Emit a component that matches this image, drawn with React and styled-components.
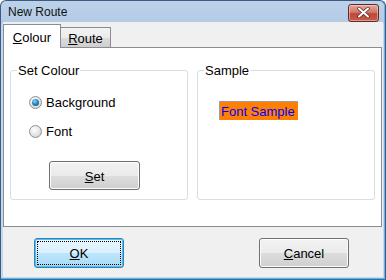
import React from 'react';
import styled, { createGlobalStyle } from 'styled-components';

const Global = createGlobalStyle`
  html, body {
    margin: 0;
    padding: 0;
    background: #ffffff;
  }
  body {
    font-family: "Liberation Sans", Arial, sans-serif;
    font-size: 13px;
    color: #000;
  }
`;

const Window = styled.div`
  box-sizing: border-box;
  width: 386px;
  height: 280px;
  border: 1px solid #3d5b7e;
  border-bottom-color: #2e6f9e;
  border-radius: 6px 6px 0 0;
  background: linear-gradient(#bcd2ea 0px, #b3cbe6 22px, #c2d8ee 23px, #c2d8ee 100%);
  padding: 0 2px 2px 2px;
  display: flex;
  flex-direction: column;
  box-shadow: inset 0 -1px 0 #5fb6e8, inset -1px 0 0 #5fb6e8;
`;

const TitleBar = styled.div`
  height: 21px;
  display: flex;
  align-items: center;
  justify-content: space-between;
  padding-left: 5px;
  font-size: 12px;
  color: #111;
`;

const CloseButton = styled.div`
  width: 29px;
  height: 16px;
  margin-right: 4px;
  margin-top: 2px;
  border: 1px solid #5e2a2e;
  border-radius: 3px;
  background: linear-gradient(#e3a99c 0%, #d37868 45%, #c1473a 55%, #c95b48 100%);
  display: flex;
  align-items: center;
  justify-content: center;
  box-shadow: inset 0 0 0 1px rgba(255, 220, 210, 0.5);
`;

const Client = styled.div`
  flex: 1;
  background: #f0f0f0;
  display: flex;
  flex-direction: column;
  padding: 2px 1px 0 0;
`;

const TabStrip = styled.div`
  display: flex;
  align-items: flex-end;
  height: 23px;
`;

const Tab = styled.div`
  box-sizing: border-box;
  position: relative;
  border: 1px solid #898c95;
  border-bottom: none;
  display: flex;
  align-items: center;
  justify-content: center;
  ${({ $active }) =>
    $active
      ? `
    width: 58px;
    height: 24px;
    margin-bottom: -1px;
    background: #ffffff;
    z-index: 1;
    padding-top: 1px;
  `
      : `
    width: 51px;
    height: 20px;
    margin-left: -1px;
    background: linear-gradient(#f3f3f3 0%, #ebebeb 50%, #dddddd 51%, #cfcfcf 100%);
    padding-top: 1px;
  `}
`;

const Panel = styled.div`
  box-sizing: border-box;
  height: 180px;
  border: 1px solid #898c95;
  background: #ffffff;
  display: grid;
  grid-template-columns: 178px 178px;
  column-gap: 9px;
  padding: 15px 6px 0 6px;
`;

const Group = styled.fieldset`
  box-sizing: border-box;
  margin: 0;
  height: 137px;
  border: 1px solid #d5dfe5;
  border-radius: 3px;
  padding: 0 0 0 6px;
  min-width: 0;
`;

const Legend = styled.legend`
  padding: 0 1px;
  line-height: 15px;
`;

const GroupBody = styled.div`
  display: flex;
  flex-direction: column;
  align-items: flex-start;
  padding: ${({ $pad }) => $pad};
`;

const RadioRow = styled.label`
  display: flex;
  align-items: center;
  gap: 4px;
  height: 17px;
  margin-bottom: ${({ $mb }) => $mb || 0}px;
`;

const RadioDot = styled.span`
  box-sizing: border-box;
  width: 13px;
  height: 13px;
  border-radius: 50%;
  border: 1px solid #8e8f8f;
  background: radial-gradient(circle at 40% 35%, #ffffff 0%, #e6e6e6 50%, #c9c9c9 100%);
  display: flex;
  align-items: center;
  justify-content: center;

  &::after {
    content: '';
    display: ${({ $checked }) => ($checked ? 'block' : 'none')};
    width: 7px;
    height: 7px;
    border-radius: 50%;
    background: radial-gradient(circle at 40% 35%, #8fd2f7 0%, #1b79b6 55%, #0c4a84 100%);
  }
`;

const Button = styled.div`
  box-sizing: border-box;
  width: ${({ $w }) => $w}px;
  height: ${({ $h }) => $h}px;
  margin-left: ${({ $ml }) => $ml || 0}px;
  border: 1px solid #707070;
  border-radius: 3px;
  background: linear-gradient(#f2f2f2 0%, #ebebeb 50%, #dddddd 51%, #cfcfcf 100%);
  box-shadow: inset 0 0 0 1px #fcfcfc;
  display: flex;
  align-items: center;
  justify-content: center;
  padding-top: 1px;
`;

const DefaultButton = styled(Button)`
  border-color: #3c7fb1;
  background: linear-gradient(#eaf6fd 0%, #d9f0fc 50%, #bee6fd 51%, #a7d9f5 100%);
  box-shadow: inset 0 0 0 1px #48c2f5;
  position: relative;

  &::before {
    content: '';
    position: absolute;
    inset: 2px;
    border: 1px dotted #000;
  }
`;

const SampleBox = styled.div`
  background: #ff8000;
  color: #0000ff;
  border-top: 1px solid #a0a0a0;
  border-left: 1px solid #a0a0a0;
  height: 19px;
  width: 79px;
  line-height: 19px;
  padding-left: 1px;
  box-sizing: border-box;
  white-space: nowrap;
`;

const ButtonRow = styled.div`
  flex: 1;
  display: flex;
  align-items: center;
  justify-content: space-between;
  padding: 1px 33px 0 31px;
`;

export default function App() {
  return (
    <>
      <Global />
      <Window>
        <TitleBar>
          <span>New Route</span>
          <CloseButton>
            <svg width="13" height="11" viewBox="0 0 13 11">
              <path d="M2 1.5 L11 9.5 M11 1.5 L2 9.5" stroke="#5a2a2a" strokeWidth="3.4" strokeLinecap="round" />
              <path d="M2 1.5 L11 9.5 M11 1.5 L2 9.5" stroke="#ffffff" strokeWidth="2" strokeLinecap="round" />
            </svg>
          </CloseButton>
        </TitleBar>
        <Client>
          <TabStrip>
            <Tab $active>
              <span><u>C</u>olour</span>
            </Tab>
            <Tab>
              <span><u>R</u>oute</span>
            </Tab>
          </TabStrip>
          <Panel>
            <Group>
              <Legend>Set Colour</Legend>
              <GroupBody $pad="16px 0 0 12px">
                <RadioRow $mb={12}>
                  <RadioDot $checked />
                  Background
                </RadioRow>
                <RadioRow $mb={21}>
                  <RadioDot />
                  Font
                </RadioRow>
                <Button $w={91} $h={29} $ml={20}>
                  <span><u>S</u>et</span>
                </Button>
              </GroupBody>
            </Group>
            <Group>
              <Legend>Sample</Legend>
              <GroupBody $pad="23px 0 0 15px">
                <SampleBox>Font Sample</SampleBox>
              </GroupBody>
            </Group>
          </Panel>
          <ButtonRow>
            <DefaultButton $w={90} $h={30}>
              <span><u>O</u>K</span>
            </DefaultButton>
            <Button $w={90} $h={30}>
              <span><u>C</u>ancel</span>
            </Button>
          </ButtonRow>
        </Client>
      </Window>
    </>
  );
}
